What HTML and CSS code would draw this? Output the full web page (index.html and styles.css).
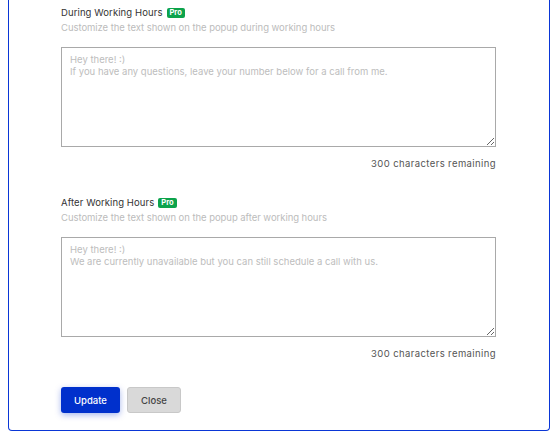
FILE: index.html
```html
<!DOCTYPE html>
<html lang="en">
<head>
<meta charset="utf-8">
<title>Popup text settings</title>
<link rel="stylesheet" href="styles.css">
</head>
<body>
<div class="panel">
  <section class="field">
    <div class="label">During Working Hours <span class="pro">Pro</span></div>
    <div class="hint">Customize the text shown on the popup during working hours</div>
    <textarea class="box" placeholder="Hey there! :)&#10;If you have any questions, leave your number below for a call from me."></textarea>
    <div class="count">300 characters remaining</div>
  </section>
  <section class="field second">
    <div class="label">After Working Hours <span class="pro">Pro</span></div>
    <div class="hint">Customize the text shown on the popup after working hours</div>
    <textarea class="box" placeholder="Hey there! :)&#10;We are currently unavailable but you can still schedule a call with us."></textarea>
    <div class="count">300 characters remaining</div>
  </section>
  <div class="actions">
    <button class="btn primary">Update</button>
    <button class="btn secondary">Close</button>
  </div>
</div>
</body>
</html>
```

FILE: styles.css
```css
html, body {
  margin: 0;
  padding: 0;
  background: #ffffff;
}
body {
  padding: 0 8px;
  font-family: "Inter", "Roboto", sans-serif;
}
.panel {
  border: 1px solid #0a36d6;
  border-top: 0;
  border-radius: 0 0 4px 4px;
  padding: 6px 53px 17px 52px;
}
.field {
  display: flex;
  flex-direction: column;
}
.second {
  margin-top: 25px;
}
.label {
  font-size: 9.5px;
  line-height: 14px;
  color: #333333;
  letter-spacing: 0.1px;
  display: flex;
  align-items: center;
  gap: 4px;
}
.pro {
  background: #0ca34c;
  color: #ffffff;
  font-weight: 700;
  font-size: 7.5px;
  line-height: 10px;
  padding: 0 3px;
  border-radius: 2px;
  letter-spacing: 0;
}
.hint {
  margin-top: 1px;
  font-size: 9.5px;
  line-height: 14px;
  color: #bcbcbc;
  letter-spacing: -0.05px;
}
.box {
  margin-top: 12px;
  height: 100px;
  box-sizing: border-box;
  border: 1px solid #a9a9a9;
  border-radius: 0;
  padding: 6px 8px;
  font-family: inherit;
  font-size: 9.5px;
  line-height: 12px;
  resize: vertical;
  width: 100%;
  display: block;
}
.box::placeholder {
  color: #bdbdbd;
}
.count {
  margin-top: 10px;
  text-align: right;
  font-size: 9.5px;
  line-height: 14px;
  color: #555555;
  letter-spacing: 0.4px;
}
.actions {
  margin-top: 26px;
  display: flex;
  gap: 7px;
}
.btn {
  height: 26px;
  font-family: inherit;
  font-size: 9.5px;
  font-weight: 500;
  border-radius: 3px;
  padding: 0;
  cursor: pointer;
}
.primary {
  width: 59px;
  background: #0030cc;
  color: #ffffff;
  border: 0;
  box-shadow: 0 2px 6px rgba(0, 48, 204, 0.35);
}
.secondary {
  width: 54px;
  background: #d9d9d9;
  color: #444444;
  border: 1px solid #c8c8c8;
}
```
